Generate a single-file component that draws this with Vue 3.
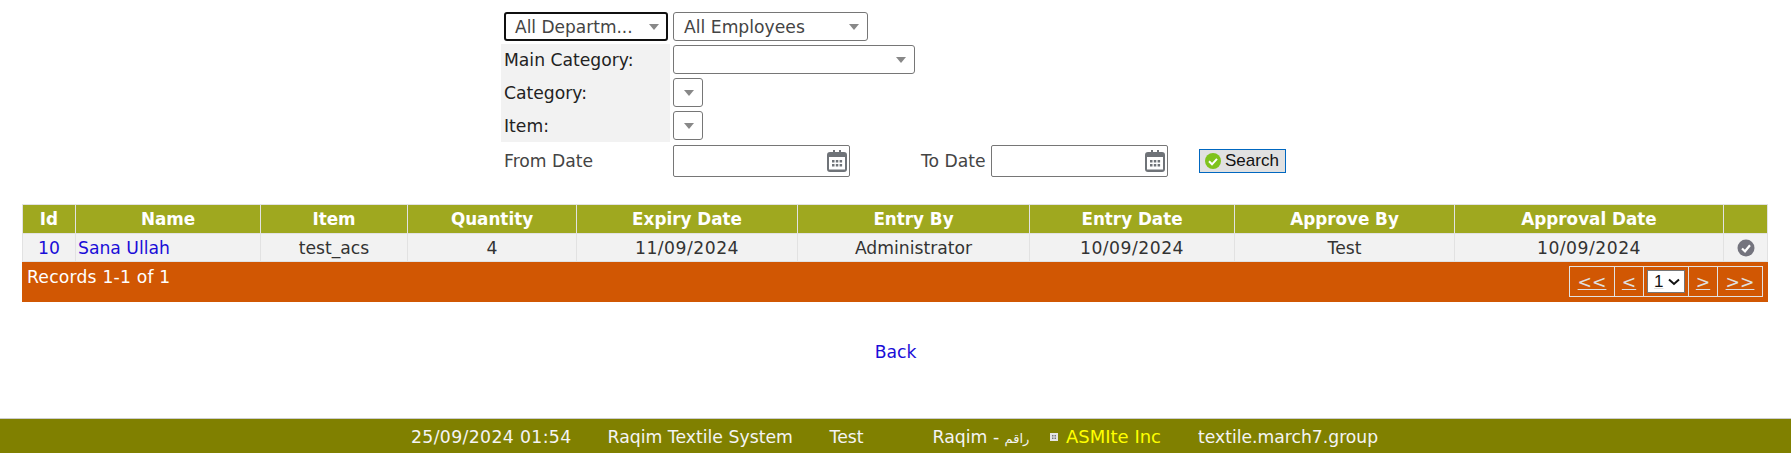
<script setup>
const rows = [{ id: 10, name: 'Sana Ullah', item: 'test_acs', qty: 4, expiry: '11/09/2024', by: 'Administrator', entry: '10/09/2024', approve: 'Test', date: '10/09/2024' }]
const cols = [53, 185, 147, 169, 221, 232, 205, 220, 269, 44]
const heads = ['Id', 'Name', 'Item', 'Quantity', 'Expiry Date', 'Entry By', 'Entry Date', 'Approve By', 'Approval Date', '']
</script>

<template>
  <div class="page">
    <form class="filters" @submit.prevent>
      <div class="row first">
        <div class="sel focus w-dept"><span class="val">All Departm...</span><i class="arrow"></i></div>
        <div class="sel w-emp"><span class="val">All Employees</span><i class="arrow"></i></div>
      </div>
      <div class="labelled">
        <div class="row field">
          <label class="lab">Main Category:</label>
          <div class="sel w-main"><i class="arrow"></i></div>
        </div>
        <div class="row field">
          <label class="lab">Category:</label>
          <div class="sel w-small"><i class="arrow"></i></div>
        </div>
        <div class="row field">
          <label class="lab">Item:</label>
          <div class="sel w-small"><i class="arrow"></i></div>
        </div>
      </div>
      <div class="row dates">
        <label class="from">From Date</label>
        <div class="date">
          <svg class="cal" viewBox="0 0 20 22"><path fill="#6f7378" d="M3 2h3V0h2v2h4V0h2v2h3a3 3 0 0 1 3 3v14a3 3 0 0 1-3 3H3a3 3 0 0 1-3-3V5a3 3 0 0 1 3-3z"/><rect x="2" y="7" width="16" height="12.500" fill="#fff"/><g fill="#6f7378"><rect x="5" y="10" width="2.500" height="2.500"/><rect x="8.800" y="10" width="2.500" height="2.500"/><rect x="12.600" y="10" width="2.500" height="2.500"/><rect x="5" y="14" width="2.500" height="2.500"/><rect x="8.800" y="14" width="2.500" height="2.500"/><rect x="12.600" y="14" width="2.500" height="2.500"/></g></svg>
        </div>
        <label class="to">To Date</label>
        <div class="date">
          <svg class="cal" viewBox="0 0 20 22"><path fill="#6f7378" d="M3 2h3V0h2v2h4V0h2v2h3a3 3 0 0 1 3 3v14a3 3 0 0 1-3 3H3a3 3 0 0 1-3-3V5a3 3 0 0 1 3-3z"/><rect x="2" y="7" width="16" height="12.500" fill="#fff"/><g fill="#6f7378"><rect x="5" y="10" width="2.500" height="2.500"/><rect x="8.800" y="10" width="2.500" height="2.500"/><rect x="12.600" y="10" width="2.500" height="2.500"/><rect x="5" y="14" width="2.500" height="2.500"/><rect x="8.800" y="14" width="2.500" height="2.500"/><rect x="12.600" y="14" width="2.500" height="2.500"/></g></svg>
        </div>
        <button class="search" type="button">
          <svg class="ok" viewBox="0 0 16 16"><circle cx="8" cy="8" r="8" fill="#7fc31c"/><path d="M4 8.300l3 3 5-5.500" fill="none" stroke="#fff" stroke-width="2"/></svg>
          Search
        </button>
      </div>
    </form>

    <table class="grid">
      <colgroup><col v-for="(w, i) in cols" :key="i" :style="{ width: w + 'px' }"></colgroup>
      <thead>
        <tr><th v-for="h in heads" :key="h">{{ h }}</th></tr>
      </thead>
      <tbody>
        <tr v-for="r in rows" :key="r.id">
          <td class="c"><a href="#">{{ r.id }}</a></td>
          <td><a href="#">{{ r.name }}</a></td>
          <td class="c">{{ r.item }}</td>
          <td class="c">{{ r.qty }}</td>
          <td class="c num">{{ r.expiry }}</td>
          <td class="c">{{ r.by }}</td>
          <td class="c num">{{ r.entry }}</td>
          <td class="c">{{ r.approve }}</td>
          <td class="c num">{{ r.date }}</td>
          <td class="c">
            <svg class="done" viewBox="0 0 18 18"><circle cx="9" cy="9" r="8.500" fill="#74747e"/><path d="M5 9.500l3 2.800 5-6" fill="none" stroke="#fff" stroke-width="2.200"/></svg>
          </td>
        </tr>
      </tbody>
    </table>
    <div class="pagerbar">
      <span class="records">Records 1-1 of 1</span>
      <div class="pager">
        <a class="pg wide" href="#">&lt;&lt;</a>
        <a class="pg" href="#">&lt;</a>
        <span class="pg pick">
          <select><option>1</option></select>
          <svg class="chev" viewBox="0 0 12 8"><path d="M1 1.500l5 4.500 5-4.500" fill="none" stroke="#111" stroke-width="2"/></svg>
        </span>
        <a class="pg" href="#">&gt;</a>
        <a class="pg wide" href="#">&gt;&gt;</a>
      </div>
    </div>

    <div class="back"><a href="#">Back</a></div>

    <footer class="foot">
      <span class="f-date">25/09/2024 01:54</span>
      <span class="f-sys">Raqim Textile System</span>
      <span class="f-user">Test</span>
      <span class="f-brand">Raqim - <span class="ar">راقم</span></span>
      <svg class="f-icon" viewBox="0 0 8 8"><rect width="8" height="8" fill="#e4e4e4"/><path d="M2 2h1.500v1.500H2zM4.500 2H6v1.500H4.500zM2 4.500h1.500V6H2zM4.500 4.500H6V6H4.500z" fill="#777"/></svg>
      <a class="f-link" href="#">ASMIte Inc</a>
      <span class="f-host">textile.march7.group</span>
    </footer>
  </div>
</template>

<style>
html, body { margin: 0; background: #fff; }
</style>

<style scoped>
.page {
  width: 1791px;
  height: 453px;
  position: relative;
  overflow: hidden;
  font-family: "DejaVu Sans", Verdana, sans-serif;
  font-size: 17.2px;
  color: #333;
}
.filters { margin-left: 501px; padding-top: 12px; height: 204px; box-sizing: border-box; }
.row { display: flex; align-items: center; }
.first { height: 29px; margin-bottom: 3px; padding-left: 3px; gap: 5px; }
.labelled { width: 169px; height: 98px; background: #f2f2f2; }
.field { height: 33px; width: 420px; align-items: flex-start; padding-top: 1px; box-sizing: border-box; }
.lab { width: 172px; flex: none; padding-left: 3px; box-sizing: border-box; color: #222; line-height: 31px; }
.sel {
  position: relative;
  height: 29px;
  box-sizing: border-box;
  border: 1px solid #767676;
  border-radius: 3px;
  background: #fff;
  display: flex;
  align-items: center;
  padding-left: 10px;
  color: #444;
}
.focus { border: 2px solid #101010; padding-left: 9px; }
.w-dept { width: 164px; font-size: 17px; }
.w-emp { width: 195px; }
.w-main { width: 242px; }
.w-small { width: 30px; }
.val { white-space: nowrap; }
.arrow {
  position: absolute;
  right: 8px;
  top: 11px;
  border-left: 5px solid transparent;
  border-right: 5px solid transparent;
  border-top: 6px solid #888;
}
.focus .arrow { right: 7px; top: 10px; }
.dates { height: 32px; margin-top: 3px; }
.from { width: 172px; padding-left: 3px; box-sizing: border-box; color: #444; }
.to { margin-left: 71px; width: 70px; white-space: nowrap; color: #444; }
.date {
  width: 177px;
  height: 32px;
  box-sizing: border-box;
  border: 1px solid #767676;
  border-radius: 2px;
  background: #fff;
  display: flex;
  align-items: center;
  justify-content: flex-end;
  padding-right: 2px;
}
.cal { width: 20px; height: 22px; display: block; }
.search {
  margin-left: 31px;
  height: 24px;
  width: 87px;
  box-sizing: border-box;
  border: 1px solid #0067c0;
  background: #e1e1e1;
  font-family: "Liberation Sans", Arial, sans-serif;
  font-size: 17px;
  color: #111;
  display: flex;
  align-items: center;
  gap: 4px;
  padding: 0 0 0 5px;
}
.ok { width: 16px; height: 16px; flex: none; }

.grid {
  margin-left: 22px;
  width: 1746px;
  table-layout: fixed;
  border-collapse: collapse;
}
.grid th {
  height: 29px;
  padding: 0;
  background: #9fa81f;
  color: #fff;
  font-weight: 700;
  font-size: 16.8px;
  border: 1px solid #e2e2e2;
  box-sizing: border-box;
}
.grid td {
  height: 28px;
  padding: 0 2px;
  background: #f2f2f2;
  border: 1px solid #e2e2e2;
  box-sizing: border-box;
}
.c { text-align: center; }
.num { letter-spacing: 0.5px; }
a { color: #1a0dd8; text-decoration: none; }
.done { width: 18px; height: 18px; display: block; margin: 0 auto; }

.pagerbar {
  margin-left: 22px;
  width: 1746px;
  height: 40px;
  background: #d15703;
  display: flex;
  justify-content: space-between;
  color: #fff;
  box-sizing: border-box;
  padding: 4px 5px 0 5px;
}
.records { letter-spacing: 0.2px; padding-top: 1px; }
.pager { display: flex; height: 31px; border: 1px solid #e2e2e2; box-sizing: border-box; }
.pg {
  color: #e0e0e0;
  text-decoration: underline;
  min-width: 28px;
  display: flex;
  align-items: center;
  justify-content: center;
  border-left: 1px solid #e2e2e2;
}
.pg:first-child { border-left: 0; }
.wide { width: 44px; }
.pick { position: relative; width: 45px; box-sizing: border-box; }
.pick select {
  appearance: none;
  width: 38px;
  height: 23px;
  padding: 0 0 0 6px;
  font-size: 17px;
  font-family: "Liberation Sans", Arial, sans-serif;
  background: #fff;
  color: #111;
  border: 1px solid #767676;
  border-radius: 0;
}
.chev { position: absolute; right: 8px; top: 11px; width: 12px; height: 8px; pointer-events: none; }

.back { margin-top: 39px; text-align: center; height: 22px; line-height: 22px; }
.foot {
  position: absolute;
  left: 0;
  right: 0;
  bottom: 0;
  height: 33px;
  padding-top: 1px;
  border-top: 1px solid #ccc;
  background: #808000;
  color: #f4f4f4;
  display: flex;
  align-items: center;
  padding-left: 411px;
  font-size: 17.3px;
}
.foot span, .foot a { white-space: nowrap; }
.f-date { letter-spacing: 0.35px; }
.f-sys { margin-left: 36px; }
.f-user { margin-left: 36.6px; }
.f-brand { margin-left: 69px; }
.ar { font-family: "DejaVu Sans", sans-serif; font-size: 13px; }
.f-icon { width: 8px; height: 8px; margin-left: 20.6px; }
.f-link { color: #ffff00; margin-left: 8px; font-size: 18px; }
.f-host { margin-left: 37px; font-size: 17.2px; }
</style>
